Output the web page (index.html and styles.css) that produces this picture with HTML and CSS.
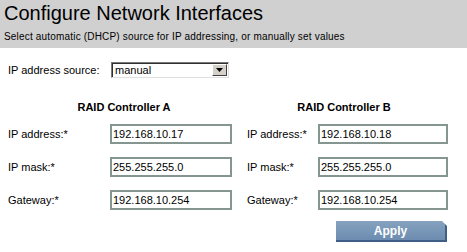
FILE: index.html
```html
<!DOCTYPE html>
<html lang="en">
<head>
    <meta charset="UTF-8">
    <title>Configure Network Interfaces</title>
    <link rel="stylesheet" href="styles.css">
</head>
<body>
    <div class="header">
        <h1 class="header-title">Configure Network Interfaces</h1>
        <p class="header-sub">Select automatic (DHCP) source for IP addressing, or manually set values</p>
    </div>

    <div class="source-row">
        <span class="field-label">IP address source:</span>
        <div class="select-box">
            <span class="select-value">manual</span>
            <span class="select-arrow">
                <svg width="7" height="4" viewBox="0 0 7 4"><polygon points="0,0 7,0 3.5,4" fill="#000"></polygon></svg>
            </span>
        </div>
    </div>

    <div class="controllers">
        <div class="controller-title">RAID Controller A</div>
        <div class="controller-title">RAID Controller B</div>

        <span class="field-label">IP address:*</span>
        <input class="text-input" type="text" value="192.168.10.17">
        <span class="field-label right">IP address:*</span>
        <input class="text-input" type="text" value="192.168.10.18">

        <span class="field-label">IP mask:*</span>
        <input class="text-input" type="text" value="255.255.255.0">
        <span class="field-label right">IP mask:*</span>
        <input class="text-input" type="text" value="255.255.255.0">

        <span class="field-label">Gateway:*</span>
        <input class="text-input" type="text" value="192.168.10.254">
        <span class="field-label right">Gateway:*</span>
        <input class="text-input" type="text" value="192.168.10.254">
    </div>

    <div class="actions">
        <button class="apply-btn">Apply</button>
    </div>
</body>
</html>
```

FILE: styles.css
```css
* {
    margin: 0;
    padding: 0;
    box-sizing: border-box;
}

body {
    background-color: #ffffff;
    color: #000000;
    font-family: 'Liberation Sans', Arial, sans-serif;
    font-size: 11px;
}

.header {
    background-color: #d0d0d0;
    height: 48px;
    padding: 2px 4px 0;
}

.header-title {
    font-size: 20px;
    font-weight: normal;
    line-height: 23px;
}

.header-sub {
    font-size: 10px;
    line-height: 12px;
    letter-spacing: 0.18px;
    margin-top: 6px;
}

.source-row {
    display: flex;
    align-items: center;
    margin-top: 14px;
    padding-left: 8px;
}

.source-row .field-label {
    width: 103px;
}

.field-label {
    font-size: 11px;
    line-height: 13px;
}

.select-box {
    display: flex;
    align-items: stretch;
    width: 118px;
    height: 16px;
    border: 1px solid #7a7a7a;
    border-right-color: #e0e0e0;
    border-bottom-color: #e0e0e0;
    box-shadow: inset 1px 1px 0 #303030;
    background-color: #ffffff;
}

.select-value {
    flex: 1;
    padding: 1px 0 0 3px;
    font-size: 11px;
    line-height: 13px;
}

.select-arrow {
    width: 15px;
    margin: 1px 1px 1px 0;
    background-color: #d4d0c8;
    border: 1px solid #ffffff;
    border-right-color: #404040;
    border-bottom-color: #404040;
    display: flex;
    align-items: center;
    justify-content: center;
}

.controllers {
    display: grid;
    grid-template-columns: 102px 122px 86px 130px;
    grid-template-rows: 10px;
    grid-auto-rows: 20px;
    row-gap: 13px;
    align-items: center;
    margin: 23px 0 0 8px;
}

.controller-title {
    grid-column: span 2;
    font-weight: bold;
    text-align: center;
    line-height: 13px;
    align-self: start;
    padding-left: 8px;
}

.field-label.right {
    padding-left: 15px;
}

.text-input {
    width: 100%;
    height: 20px;
    border: 2px solid #84968f;
    padding: 0 1px;
    font-family: 'Liberation Sans', Arial, sans-serif;
    font-size: 11px;
    color: #000000;
    background-color: #ffffff;
    outline: none;
}

.actions {
    display: flex;
    justify-content: flex-end;
    margin-top: 11px;
    padding-right: 20px;
}

.apply-btn {
    width: 111px;
    height: 21px;
    border: none;
    border-right: 2px solid #3f5f86;
    border-bottom: 2px solid #3f5f86;
    background: linear-gradient(#86a2bf, #6c8cb0);
    color: #ffffff;
    font-family: 'Liberation Sans', Arial, sans-serif;
    font-size: 12px;
    font-weight: bold;
    clip-path: polygon(0 0, calc(100% - 5px) 0, 100% 5px, 100% 100%, 0 100%);
    cursor: pointer;
}
```
